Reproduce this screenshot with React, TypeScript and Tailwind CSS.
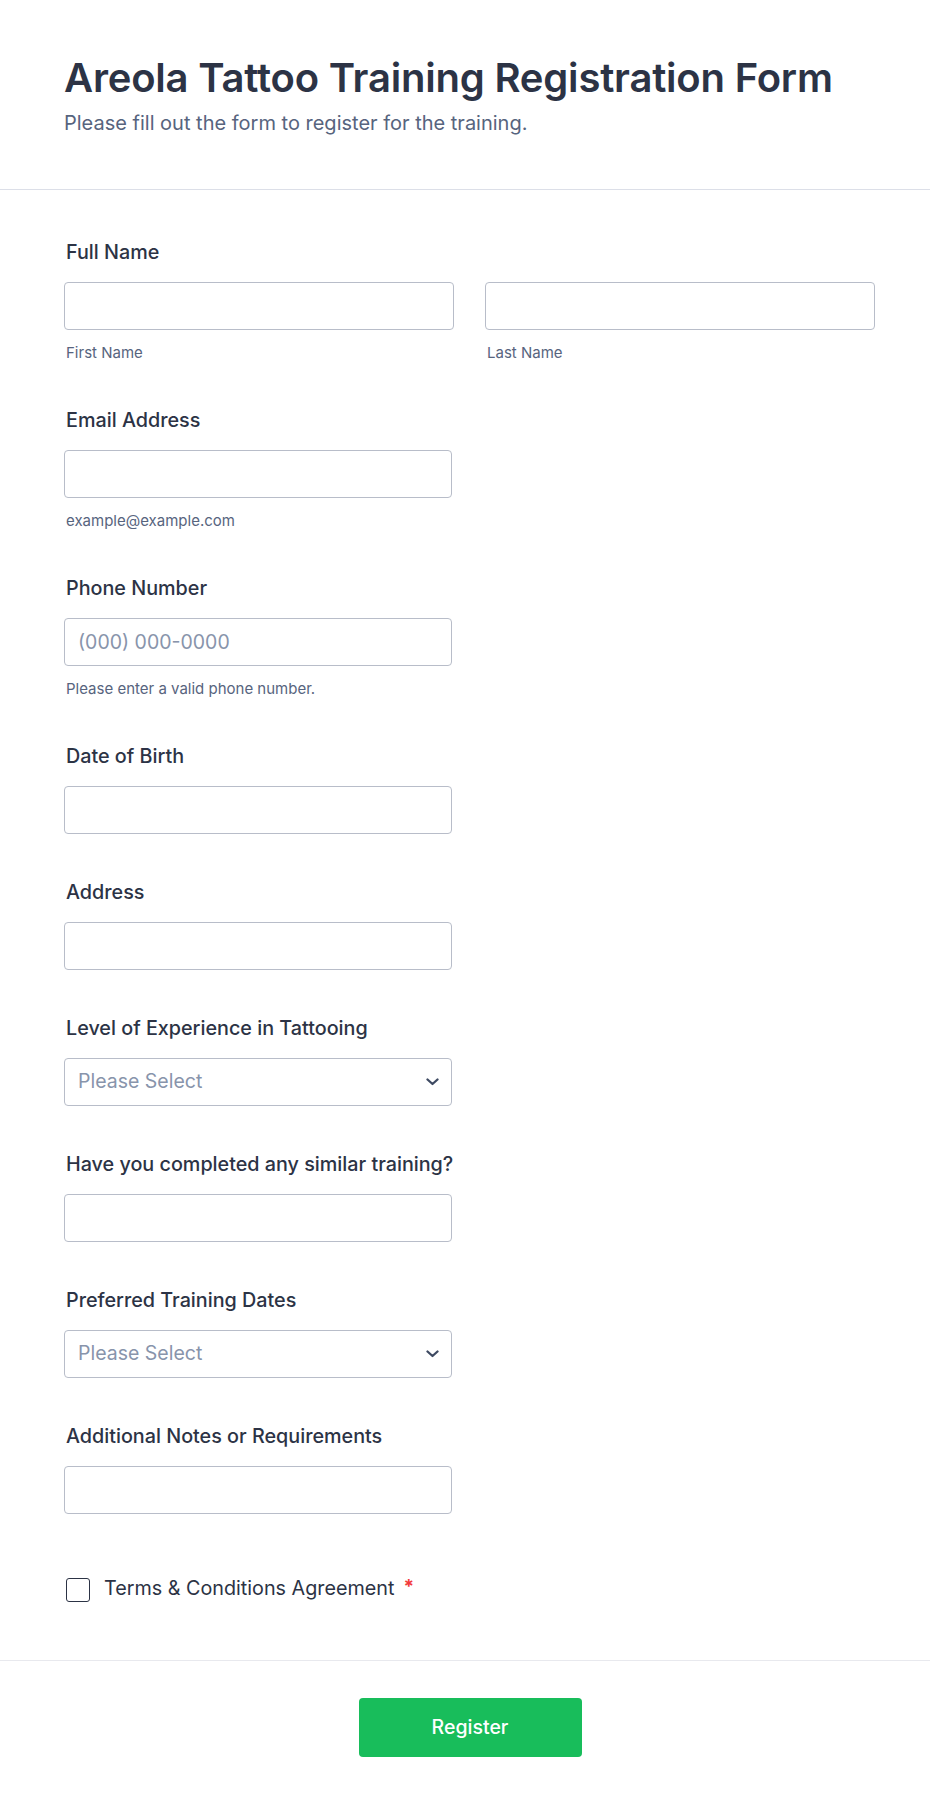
import React from 'react';

type Field = {
  label: string;
  kind: 'text' | 'select';
  placeholder?: string;
  helper?: string;
};

const fields: Field[] = [
  { label: 'Email Address', kind: 'text', helper: 'example@example.com' },
  { label: 'Phone Number', kind: 'text', placeholder: '(000) 000-0000', helper: 'Please enter a valid phone number.' },
  { label: 'Date of Birth', kind: 'text' },
  { label: 'Address', kind: 'text' },
  { label: 'Level of Experience in Tattooing', kind: 'select' },
  { label: 'Have you completed any similar training?', kind: 'text' },
  { label: 'Preferred Training Dates', kind: 'select' },
  { label: 'Additional Notes or Requirements', kind: 'text' },
];

function Label({ children }: { children: React.ReactNode }) {
  return <label className="block ml-[2px] mb-[18px] text-[19.75px] leading-[24px] font-medium text-[#2c3345]">{children}</label>;
}

function Helper({ children }: { children: React.ReactNode }) {
  return <div className="mt-[14px] ml-[2px] text-[15px] leading-[18px] text-[#57647e]">{children}</div>;
}

function TextBox({ placeholder, width = 'w-[388px]' }: { placeholder?: string; width?: string }) {
  return (
    <input
      type="text"
      placeholder={placeholder}
      className={`${width} h-[48px] rounded-[4px] border border-[#b8bdc9] bg-white px-[13px] text-[19.5px] text-[#2c3345] placeholder:text-[#8894ab] outline-none`}
    />
  );
}

function SelectBox() {
  return (
    <div className="w-[388px] h-[48px] rounded-[4px] border border-[#b8bdc9] bg-white flex items-center pl-[13px] pr-[12px]">
      <span className="flex-1 text-[19.5px] text-[#8894ab]">Please Select</span>
      <svg width="13" height="8" viewBox="0 0 13 8" fill="none">
        <path d="M1.5 1.5 L6.5 6 L11.5 1.5" stroke="#3e4a62" strokeWidth="2.3" strokeLinecap="round" strokeLinejoin="round" />
      </svg>
    </div>
  );
}

export default function App() {
  return (
    <div className="min-h-[1807px] bg-white" style={{ fontFamily: 'Inter, "Noto Sans", sans-serif' }}>
      <header className="pl-[64px] pr-[54px] pt-[54px] pb-[54px] border-b border-[#dcdfe8]">
        <h1 className="text-[40px] leading-[48px] font-semibold text-[#2c3345] tracking-[-0.2px]">
          Areola Tattoo Training Registration Form
        </h1>
        <p className="mt-[9px] text-[20px] leading-[24px] text-[#57647e]">Please fill out the form to register for the training.</p>
      </header>

      <main className="pl-[64px] pr-[54px] pt-[50px] flex flex-col gap-[46px]">
        <div>
          <Label>Full Name</Label>
          <div className="flex gap-[31px]">
            <div>
              <TextBox width="w-[390px]" />
              <Helper>First Name</Helper>
            </div>
            <div>
              <TextBox width="w-[390px]" />
              <Helper>Last Name</Helper>
            </div>
          </div>
        </div>

        {fields.map((f) => (
          <div key={f.label}>
            <Label>{f.label}</Label>
            {f.kind === 'select' ? <SelectBox /> : <TextBox placeholder={f.placeholder} />}
            {f.helper && <Helper>{f.helper}</Helper>}
          </div>
        ))}

        <div className="flex items-center ml-[2px] mt-[14px] mb-[58px]">
          <span className="w-[24px] h-[24px] mt-[4px] rounded-[3px] border-[1.5px] border-[#2c3345] bg-white shrink-0" />
          <span className="ml-[14px] text-[19.75px] leading-[24px] text-[#2c3345]">Terms &amp; Conditions Agreement</span>
          <span className="ml-[9px] -mt-[2px] text-[19px] leading-[24px] font-bold text-[#f23a3c]">*</span>
        </div>
      </main>

      <footer className="border-t border-[#e8e9ee] pl-[64px] pr-[54px] pt-[37px] pb-[50px] flex justify-center">
        <button className="w-[223px] h-[59px] rounded-[4px] bg-[#18bd5b] text-white text-[19.5px] font-medium">Register</button>
      </footer>
    </div>
  );
}
